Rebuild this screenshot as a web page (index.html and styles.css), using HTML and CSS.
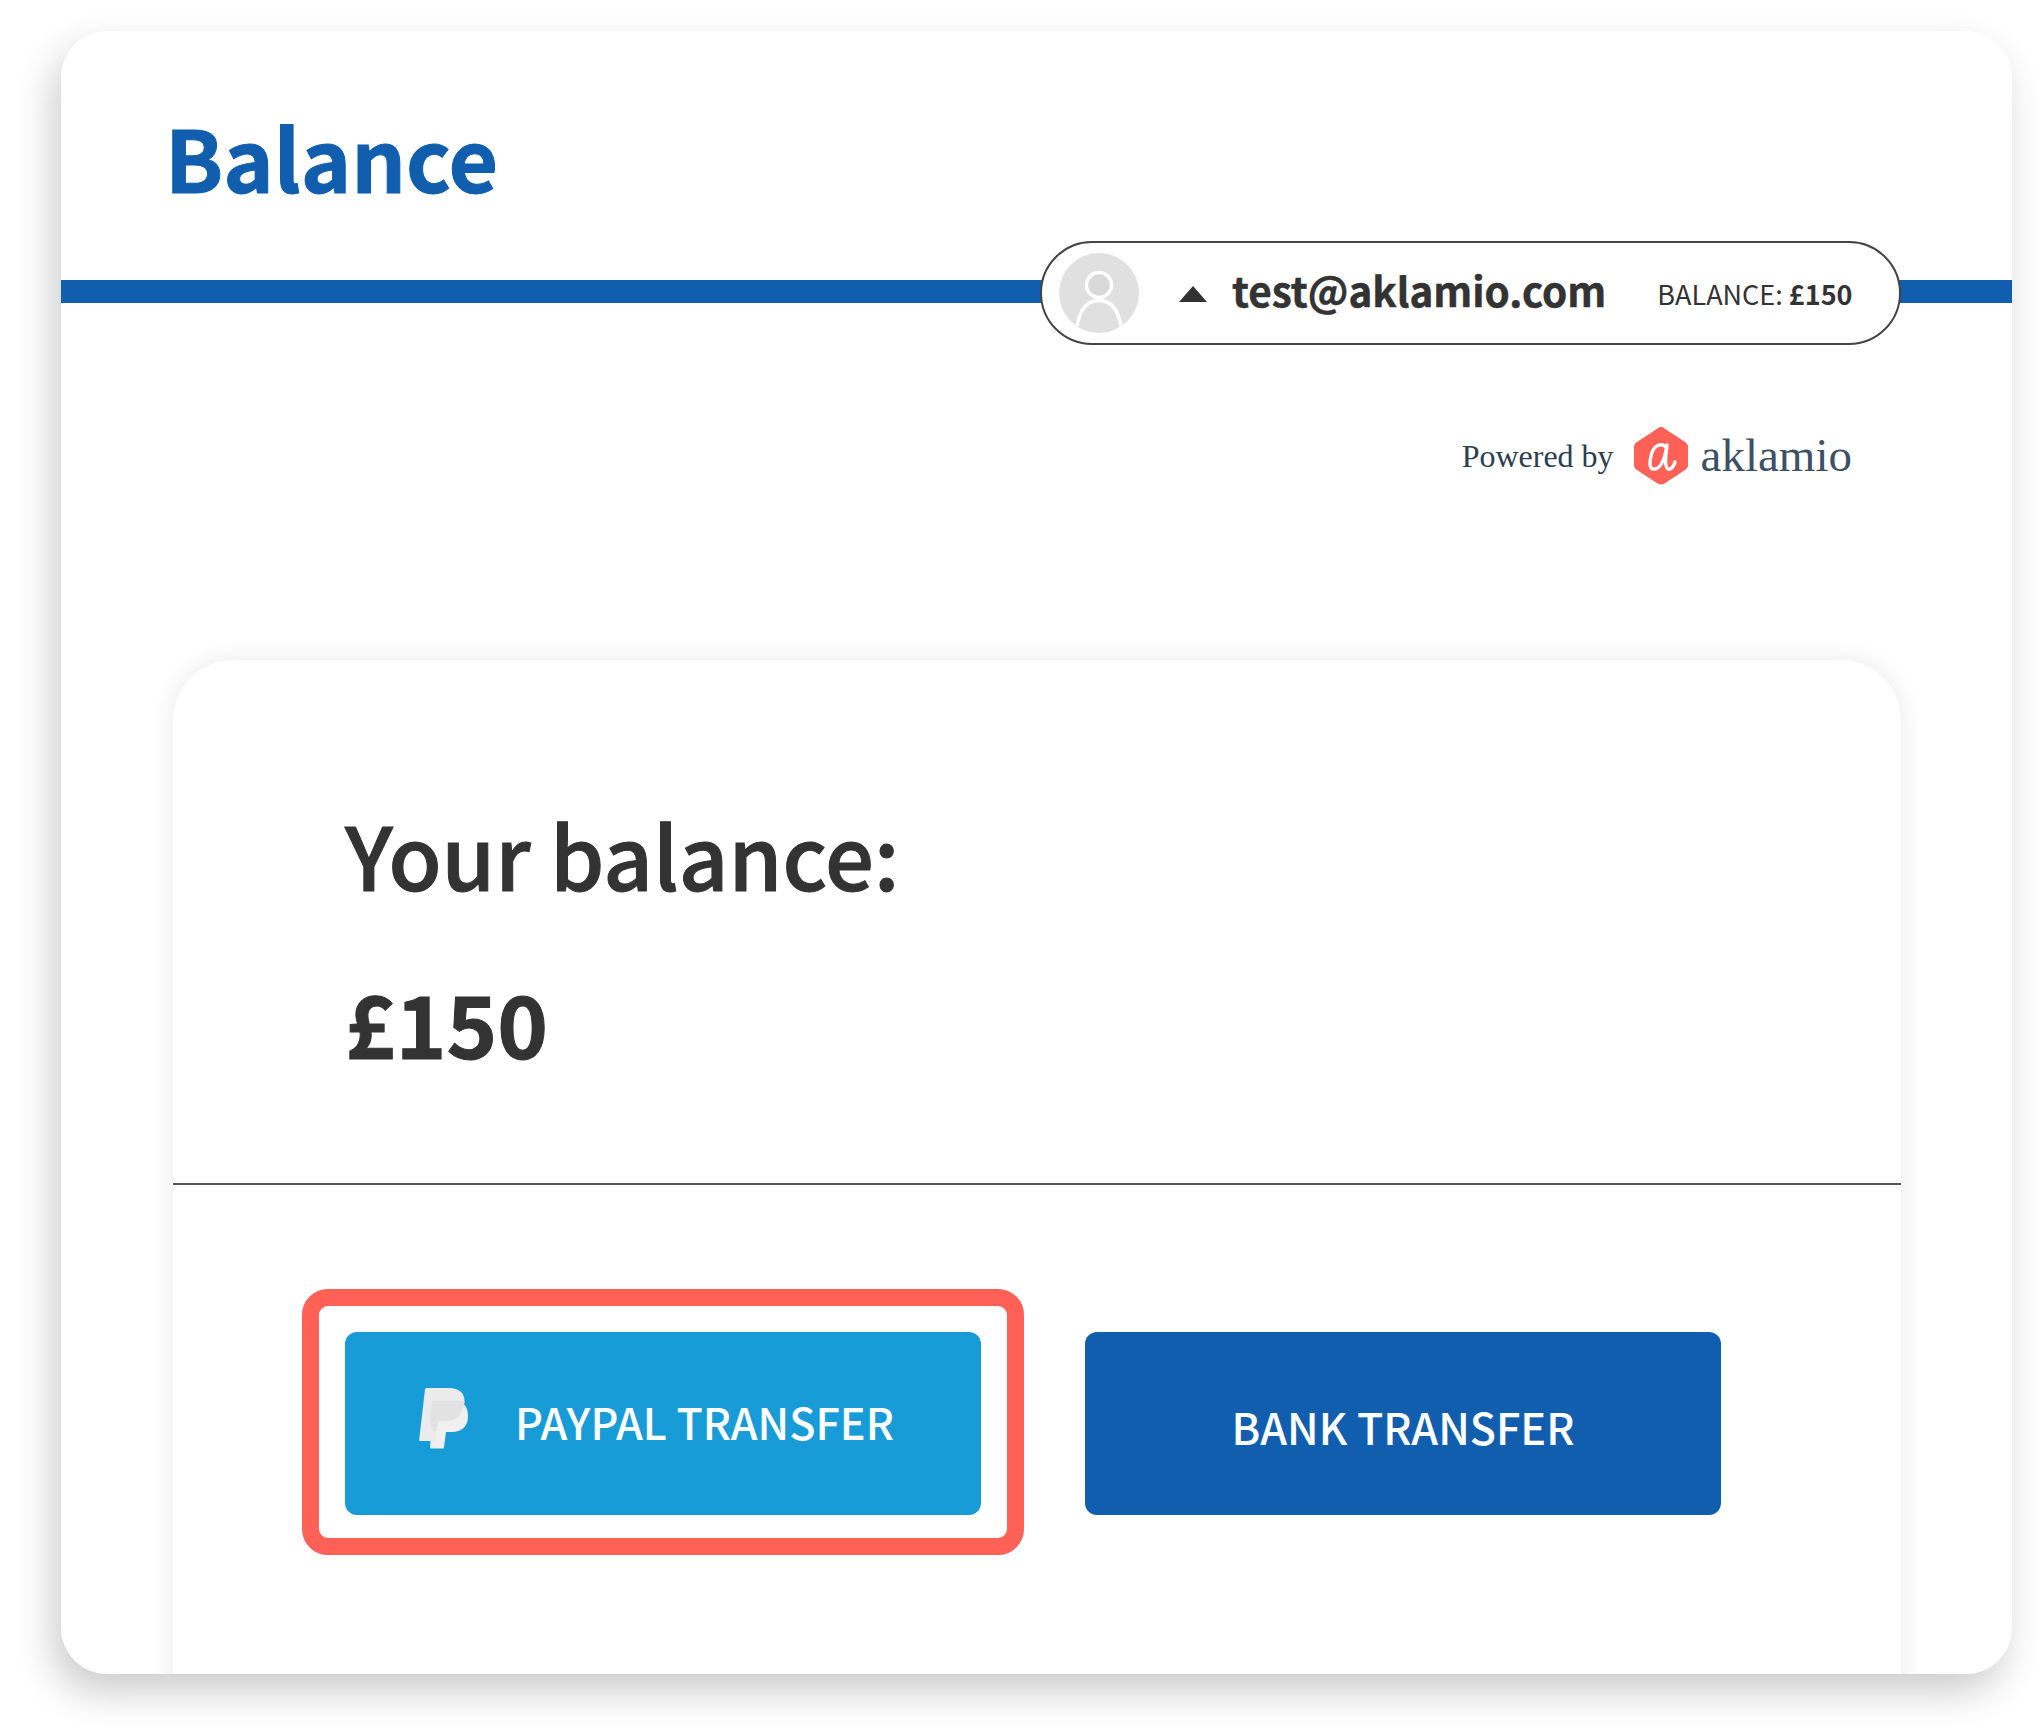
FILE: index.html
```html
<!DOCTYPE html>
<html lang="en">
<head>
<meta charset="utf-8">
<title>Balance</title>
<link rel="stylesheet" href="styles.css">
</head>
<body>
<main class="window">
  <header class="header">
    <h1 class="title">Balance</h1>
    <div class="rule">
      <div class="account">
        <svg class="avatar" viewBox="0 0 80 80" aria-hidden="true">
          <circle cx="40" cy="40" r="40" fill="#e0e0e0"/>
          <circle cx="40" cy="32" r="12.5" fill="#d9d9d9" stroke="#fff" stroke-width="3.5"/>
          <path d="M18 73 C21 56 29 47.500 40 47.500 C51 47.500 59 56 62 73" fill="none" stroke="#fff" stroke-width="3.500"/>
        </svg>
        <span class="caret"></span>
        <span class="email">test@aklamio.com</span>
        <span class="account-balance">BALANCE: <b>£150</b></span>
      </div>
    </div>
  </header>

  <div class="powered">
    <span class="powered-label">Powered by</span>
    <svg class="hex" viewBox="0 0 54 60" aria-hidden="true">
      <path d="M27 1 C28.500 1 29.500 1.600 30.500 2.400 L51 16 C52.800 17.200 54 18.500 54 21 L54 39 C54 41.500 52.800 42.800 51 44 L30.500 57.600 C29 58.700 25 58.700 23.500 57.600 L3 44 C1.200 42.800 0 41.500 0 39 L0 21 C0 18.500 1.200 17.200 3 16 L23.500 2.400 C24.500 1.600 25.500 1 27 1Z" fill="#ff6156"/>
      <path d="M33 22 C27 15 19 20 17 30 C15 39 16 44 21 43 C27 42 31 32 33 19 C32 28 30 38 33 42 C35 44.500 39 43 41 36" fill="none" stroke="#fff" stroke-width="3.400" stroke-linecap="round" stroke-linejoin="round"/>
    </svg>
    <span class="brand">aklamio</span>
  </div>

  <section class="card">
    <div class="summary">
      <h2 class="summary-label">Your balance:</h2>
      <p class="summary-value">£150</p>
    </div>
    <div class="actions">
      <div class="highlight">
        <button class="btn btn-paypal" type="button">
          <svg class="pp" viewBox="0 0 52 62" aria-hidden="true">
            <path d="M13 14 H33 C42 14 49 17 49 29 C49 41 41 45 33 45 H27 L25 60 C25 61 24.500 61.500 23.500 61.500 H12.500 C11.500 61.500 11 61 11.200 60Z" fill="#f0f0f0"/>
            <path d="M8 1 H30 C40 1 45.500 6 45.500 14 C45.500 27 38 34 27 34 H19 L16.500 54 H1.500 C.5 54 0 53.500 .2 52.500 L6 2.500 C6.200 1.500 7 1 8 1Z" fill="#ebebeb"/>
            <path d="M19 34 H27 C37 34 44 27.500 45.400 14.500 C41 14 37 14 33 14 H13 L10.800 34 L14 44 L17.500 44Z" fill="#e2e2e2"/>
          </svg>
          <span class="btn-text">PAYPAL TRANSFER</span>
        </button>
      </div>
      <button class="btn btn-bank" type="button"><span class="btn-text">BANK TRANSFER</span></button>
    </div>
  </section>
</main>
</body>
</html>
```

FILE: styles.css
```css
* { box-sizing: border-box; }

html, body { margin: 0; padding: 0; background: #fff; }

body {
  width: 2043px;
  height: 1734px;
  overflow: hidden;
  padding: 31px 31px 0 61px;
  font-family: "Noto Sans CJK SC", "Source Sans Pro", "Noto Sans", sans-serif;
  color: #333;
}

.window {
  width: 1951px;
  height: 1643px;
  background: #fff;
  border-radius: 46px;
  overflow: hidden;
  box-shadow: -8px 18px 38px rgba(0, 0, 0, .2);
}

.header { padding-top: 81px; }

.title {
  margin: 0 0 0 104px;
  height: 168px;
  font-size: 85.500px;
  line-height: 88px;
  font-weight: 700;
  color: #125eae;
  -webkit-text-stroke: 1px #125eae;
}

.rule {
  position: relative;
  height: 23px;
  background: #125eae;
}

.account {
  position: absolute;
  left: 979px;
  top: -39px;
  width: 861px;
  height: 104px;
  display: flex;
  align-items: center;
  padding-left: 17px;
  background: #fff;
  border: 2px solid #444;
  border-radius: 52px;
}

.avatar { width: 80px; height: 80px; flex: none; }

.caret {
  flex: none;
  margin: 2px 0 0 40px;
  width: 0;
  height: 0;
  border-left: 14px solid transparent;
  border-right: 14px solid transparent;
  border-bottom: 16px solid #333;
}

.email {
  margin: -6px 0 0 25px;
  font-size: 40.4px;
  line-height: 50px;
  font-weight: 700;
  white-space: nowrap;
  -webkit-text-stroke: .5px #333;
}

.account-balance {
  margin-left: 51px;
  font-size: 27px;
  line-height: 50px;
  margin-top: 2px;
  white-space: nowrap;
}

.account-balance b { font-weight: 700; }

.powered {
  display: flex;
  align-items: center;
  justify-content: flex-end;
  margin-top: 123px;
  height: 60px;
  padding-right: 160px;
}

.powered-label {
  font-family: "Liberation Serif", serif;
  font-size: 32px;
  color: #2d3e50;
  white-space: nowrap;
}

.hex { width: 54px; height: 60px; margin-left: 20px; flex: none; }

.brand {
  margin: -2px 0 0 13px;
  font-family: "Liberation Serif", serif;
  font-size: 47px;
  line-height: 60px;
  font-weight: 400;
  color: #3d5166;
  white-space: nowrap;
}

.card {
  margin: 174px 0 0 112px;
  width: 1728px;
  height: 1100px;
  background: #fff;
  border-radius: 60px;
  box-shadow: 0 0 24px rgba(0, 0, 0, .09);
}

.summary {
  height: 525px;
  padding: 150px 0 0 172px;
  border-bottom: 2px solid #555;
}

.summary-label {
  margin: 0;
  font-size: 86.500px;
  line-height: 88px;
  font-weight: 500;
  -webkit-text-stroke: 1px #333;
}

.summary-value {
  margin: 80px 0 0;
  font-size: 86px;
  line-height: 88px;
  font-weight: 700;
  -webkit-text-stroke: 1px #333;
}

.actions {
  display: flex;
  align-items: flex-start;
  margin-top: 104px;
  padding-left: 129px;
}

.highlight {
  display: flex;
  margin-right: 61px;
  width: 722px;
  height: 266px;
  padding: 26px;
  border: 17px solid #ff6156;
  border-radius: 26px;
}

.btn {
  display: flex;
  align-items: center;
  justify-content: center;
  width: 636px;
  height: 183px;
  padding: 0;
  border: 0;
  border-radius: 12px;
  font-family: inherit;
  color: #fff;
  flex: none;
}

.btn-paypal { background: #189cd8; justify-content: flex-start; padding-left: 74px; }
.btn-bank { background: #125eae; margin-top: 43px; }

.pp { width: 52px; height: 62px; flex: none; margin-bottom: 11px; }

.btn-text {
  font-size: 43.100px;
  line-height: 60px;
  font-weight: 500;
  white-space: nowrap;
}

.btn-paypal .btn-text { margin: 0 0 5px 44px; }
.btn-bank .btn-text { margin-top: 5px; }
```
